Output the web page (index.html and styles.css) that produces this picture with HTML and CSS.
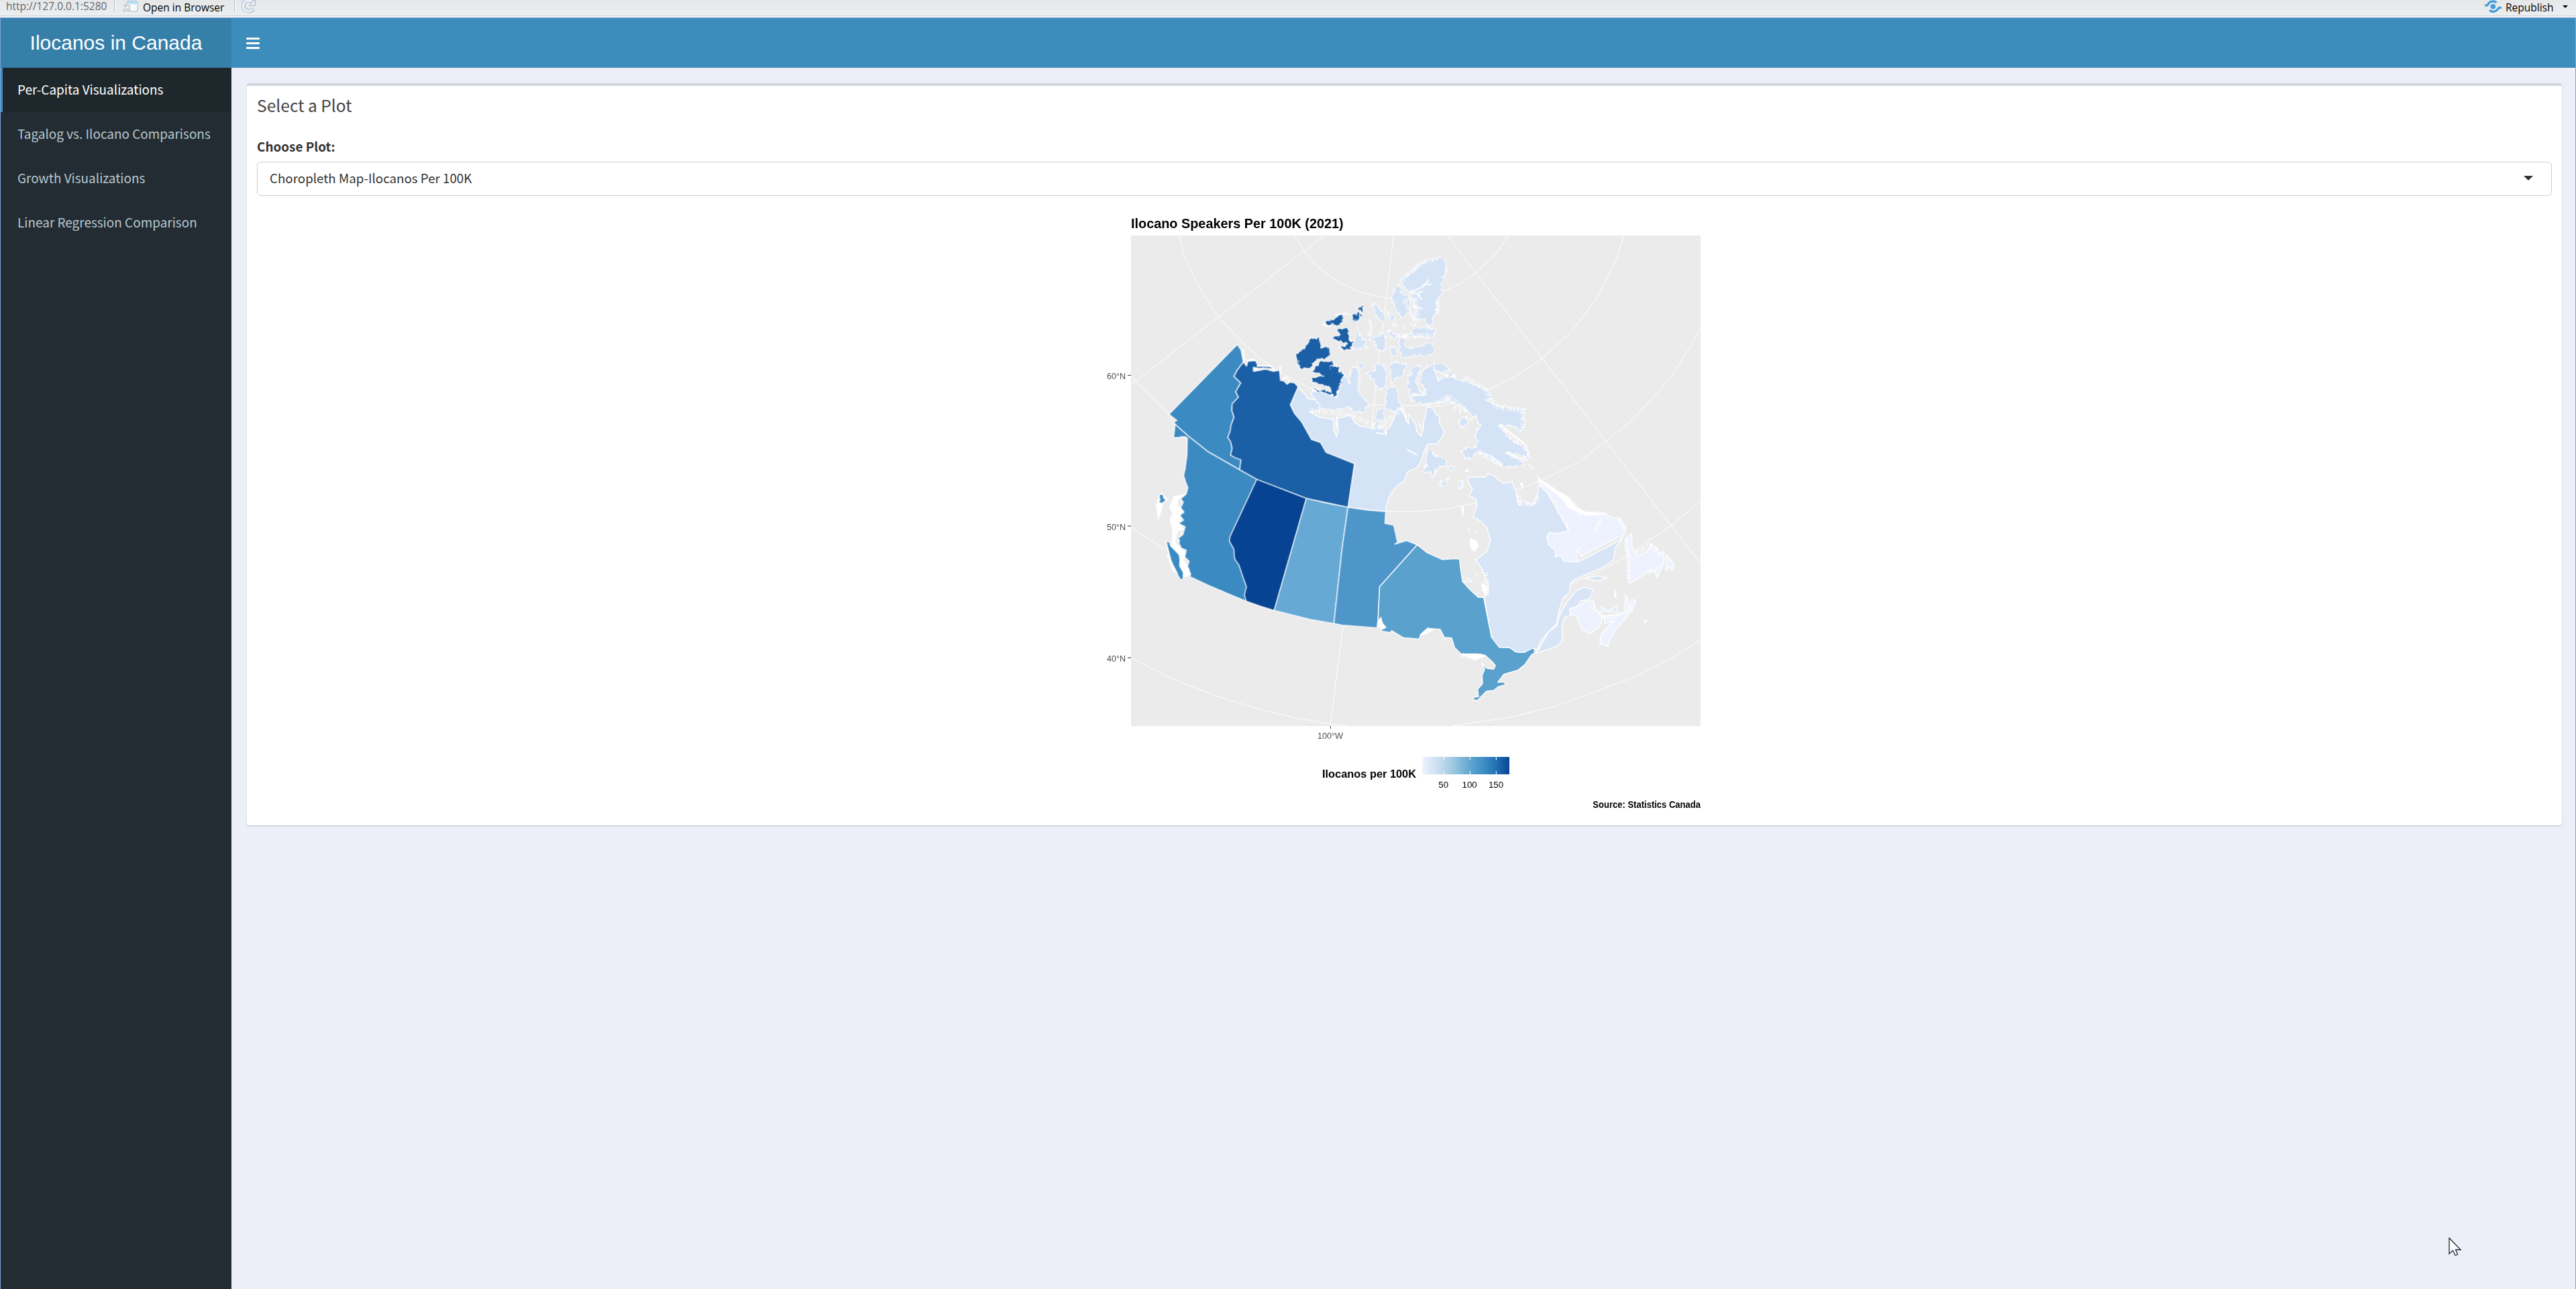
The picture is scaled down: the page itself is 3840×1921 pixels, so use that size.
FILE: index.html
```html
<!DOCTYPE html>
<html lang="en">
<head>
<meta charset="utf-8">
<title>Ilocanos in Canada</title>
<link rel="stylesheet" href="styles.css">
</head>
<body>
<div class="viewer-bar">
  <span class="url">http://127.0.0.1:5280</span>
  <i class="sep"></i>
  <svg class="ic-open" width="24" height="20" viewBox="0 0 24 20"><rect x="7" y="1.500" width="16" height="15.500" rx="2" fill="#f6f9fc" stroke="#a9b9c9"/><path d="M7 3.500q0-2 2-2h12q2 0 2 2V6H7z" fill="#b9dcf2"/><path d="M1.500 16l4.500-4.500-3-3.500h8v8l-3-3-4.500 4.500z" fill="#f4f6f8" stroke="#9aa3ac"/></svg>
  <span class="open">Open in Browser</span>
  <i class="sep sep2"></i>
  <svg class="ic-reload" width="24" height="20" viewBox="0 0 24 20"><path d="M17 2.500A8 8 0 1 0 18.500 13" fill="none" stroke="#a9b6c6" stroke-width="6"/><path d="M21.500-1v9.500h-9.500z" fill="#e6eef8" stroke="#a9b6c6"/><path d="M16.500 2.500A8 8 0 1 0 18 13.500" fill="none" stroke="#e6eef8" stroke-width="4"/></svg>
  <svg class="ic-pub" width="25" height="20" viewBox="0 0 25 20"><g fill="none" stroke="#3e9ddd" stroke-width="3.200"><path d="M0 8h3.500C5 8 5 2 12 1.800c3 0 4 1 5.500 2"/><path d="M25 11.500h-3.500C20 11.500 19 17.300 12.500 17.300c-3 0-4-1-5.500-2"/></g><circle cx="12.300" cy="9.700" r="3.800" fill="#3e9ddd"/></svg>
  <span class="pub">Republish</span>
  <i class="tri"></i>
</div>
<div class="app">
  <aside class="sidebar">
    <div class="logo">Ilocanos in Canada</div>
    <a class="item active">Per-Capita Visualizations</a>
    <a class="item">Tagalog vs. Ilocano Comparisons</a>
    <a class="item">Growth Visualizations</a>
    <a class="item">Linear Regression Comparison</a>
  </aside>
  <div class="main">
    <div class="navbar"><span class="burger"><i></i><i></i><i></i></span></div>
    <section class="box">
      <h3 class="box-title">Select a Plot</h3>
      <div class="label">Choose Plot:</div>
      <div class="select"><span>Choropleth Map-Ilocanos Per 100K</span><i class="caret"></i></div>
      <svg class="plot" viewBox="0 0 2712 2772">
        <defs>
          <linearGradient id="blues"><stop offset="0" stop-color="#eff3ff"/><stop offset=".2" stop-color="#c6dbef"/><stop offset=".35" stop-color="#9ecae1"/><stop offset=".55" stop-color="#5fa5d1"/><stop offset=".7" stop-color="#3f8ec5"/><stop offset=".85" stop-color="#2171b5"/><stop offset="1" stop-color="#084594"/></linearGradient>
          <clipPath id="panel"><path d="M138 153H2685V2346H138z"/></clipPath>
          <filter id="rough" x="-5%" y="-5%" width="110%" height="110%" color-interpolation-filters="sRGB"><feTurbulence type="fractalNoise" baseFrequency=".055" numOctaves="3" seed="4"/><feDisplacementMap in="SourceGraphic" scale="26" xChannelSelector="R" yChannelSelector="G"/></filter>
        </defs>
        <path d="M138 153H2685V2346H138z" fill="#ebebeb"/>
        <g class="grid" clip-path="url(#panel)">
          <path d="M1002 153 912 222 530 517 138 820M1312 153 1280 433 1243 720 1215 1010 1086 1897 1030 2337V2346M1553 153 1680 320 1977 702 2263 1075 2553 1450 2685 1618"/>
          <path d="M868 153 912 222 970 290 1060 358 1150 402 1280 433 1400 433 1528 405 1605 370 1680 320 1770 235 1825 153"/>
          <path d="M352 153 375 240 415 330 470 430 530 517 610 605 700 690 770 742 870 800 950 840 1210 910 1530 916 1740 840 1880 770 1977 702 2110 580 2230 420 2305 270 2340 153"/>
          <path d="M138 780 158 803 300 945 335 997 395 1050 623 1200 1277 1387 1410 1387 1530 1378 1680 1350 1860 1293 1983 1242 2140 1165 2263 1073 2380 977 2480 870 2560 775 2645 640 2685 565"/>
          <path d="M138 1452 180 1487 295 1557M2105 1710 2230 1657 2355 1588 2410 1545 2553 1450 2685 1342"/>
          <path d="M138 2041 300 2125 500 2205 700 2268 860 2307 1030 2337 1115 2346M1574 2346 1820 2309 2035 2258 2240 2183 2370 2133 2550 2045 2685 1962"/>
        </g>

        <!-- Nunavut -->
        <g class="land nu" transform="translate(780 420)">
          <path d="M105 412 70 490 90 530 120 565 165 648 205 660 230 703 357 755 328 948 497 967 500 940 510 905 525 880 545 855 580 830 595 790 640 770 660 730 668 700 685 665 725 665 755 625 755 600 735 570 740 545 720 530 710 505 680 500 676 540 668 560 664 605 655 630 635 608 632 580 605 540 598 530 600 575 590 560 586 530 566 508 540 518 535 550 515 590 500 600 500 626 490 600 465 590 440 600 420 590 385 586 360 570 340 535 305 545 278 550 286 600 278 632 265 605 264 555 200 545 160 522 200 515 208 485 190 468 150 462 130 435z"/>
        </g>
        <g class="land nu" filter="url(#rough)">
          <g transform="translate(780 420)">
            <path d="M308 345 328 390 338 388 345 320 365 322 378 345 380 370 375 425 395 460 420 480 405 520 370 525 325 500 270 515 205 505 195 480 172 460 165 422 280 455z"/>
            <path d="M368 303 395 303 394 322 380 338z"/>
            <path d="M375 143 385 190 405 200 400 235 350 238 345 205 360 200z"/>
            <path d="M424 170 440 190 470 182 480 168 496 180 497 245 465 252 447 225 452 205 425 200z"/>
            <path d="M440 40 465 45 475 70 490 80 492 115 470 112 450 80z"/><path d="M505 72 525 85 540 110 520 115z"/><path d="M422 112 432 135 430 165z"/>
            <path d="M522 125 550 130 535 138z"/><path d="M572 135 585 145 578 155zM608 120 625 128 615 142zM408 228 420 235 410 242z"/>
            <path d="M505 160 548 172 545 195 520 190z"/><path d="M513 235 540 232 546 270 520 272z"/>
            <path d="M555 190 580 190 582 225 610 235 650 228 685 214 710 220 718 245 700 268 640 270 570 280 560 250z"/>
            <path d="M565 185 600 175 625 148 700 145 720 157 705 190 640 185z"/>
            <path d="M415 345 445 340 450 310 490 308 498 350 500 400 465 425 440 380z"/>
            <path d="M518 305 550 300 590 308 570 365 545 370 520 400z"/>
            <path d="M500 425 530 400 550 430 553 470 568 500 540 518 500 510 495 450z"/>
            <path d="M457 508 490 515 495 545 470 560 450 545zM440 575 470 570 500 590 450 595z"/>
            <path d="M600 360 625 315 658 312 640 350 638 400 650 430 670 438 605 445 595 410z"/>
          </g>
          <g transform="translate(1380 120)">
            <path d="M55 650 78 622 105 610 120 640 130 680 165 665 200 660 225 680 270 685 290 705 320 705 355 730 375 755 345 770 375 785 430 800 460 810 512 812 520 880 500 905 450 880 405 880 450 940 500 970 530 1005 548 1030 480 1010 435 1003 480 1030 525 1060 420 1068 385 1045 340 1020 300 1000 285 1030 245 1025 240 995 265 983 300 975 318 958 295 935 318 880 300 850 270 825 240 800 205 785 165 748 180 775 130 775 90 788 30 780 5 755 72 742 72 715 50 690z"/>
            <path d="M108 608 155 605 183 635 140 647 122 635zM160 655 190 645 210 660 180 665z"/>
            <path d="M230 850 255 843 265 870 240 893 227 875z"/>
            <path d="M80 990 100 995 120 1020 150 1025 170 1045 165 1060 135 1068 105 1112 98 1090 65 1090 80 1050zM165 1068 205 1070 185 1085z"/>
            <path d="M140 1135 178 1115 160 1150 143 1152zM222 1140 238 1130 240 1160 228 1162zM250 1080 268 1075 260 1088zM538 1055 558 1070 545 1072zM205 800 215 805 210 812zM222 815 232 812 230 825zM50 880 60 885 56 900zM270 850 288 852 275 858z"/>
          </g>
          <path d="M1345 355 1365 335 1390 315 1410 308 1420 285 1440 275 1470 262 1525 252 1548 270 1545 320 1530 350 1528 405 1505 450 1510 490 1485 520 1488 550 1465 560 1450 525 1400 525 1415 490 1400 440 1390 415 1425 412 1450 400 1420 405 1385 408 1365 395z"/>
          <path d="M1335 370 1350 395 1348 410 1375 425 1390 445 1385 500 1350 520 1330 505 1320 480 1305 440 1312 395z"/>
        </g>
        <path class="fuzz" d="M1345 355 1390 315 1440 275 1500 258M1510 440 1505 500M1360 440 1405 530M1410 430 1420 540M1630 785 1720 835 1770 920 1890 935 1890 1020M1785 1000 1890 1085M1690 1120 1800 1180M1500 905 1560 870 1640 940M1325 600 1480 600M935 935 1100 950 1250 1010 1360 920"/>
        <path class="icefield" d="M1400 470 1440 480M1385 405 1440 385 1470 350M1440 375 1480 370M1420 415 1440 440M1060 960 1055 1020M1350 930 1375 990M1785 1000 1840 1040 1900 1085 1912 1115M1815 1125 1910 1160M1690 1120 1750 1140 1800 1185M1235 1035 1275 1040M1372 1110 1420 1135"/>

        <!-- Northwest Territories and Yukon -->
        <g class="land nt">
          <path d="M640 718 655 737 660 715 695 712 705 735 765 740 770 750 730 752 685 742 685 760 712 756 740 750 775 760 802 755 806 800 822 804 835 818 850 808 870 812 885 830 850 910 870 950 900 985 945 1065 985 1078 1010 1122 1137 1173 1108 1368 922 1328 700 1243 623 1200 629 1156 605 1147 582 1135 590 1105 583 1075 570 1055 580 1030 585 1000 598 965 588 935 590 905 618 875 605 852 628 812 598 783 612 755z"/>
          <g transform="translate(780 420)" filter="url(#rough)">
            <path d="M162 187 200 195 212 235 240 228 250 272 190 290 165 315 145 328 107 328 105 290 93 270 130 240 155 210z"/>
            <path d="M175 330 200 300 262 288 265 310 250 325 275 310 292 325 280 340 308 345 278 455 165 418 175 415 240 428 255 435 240 408 170 385 170 368 222 360 175 345z"/>
            <path d="M218 125 260 106 285 84 306 88 304 125 265 142 258 128 230 138zM262 185 296 178 275 158 300 146 328 152 338 200 352 210 342 238 310 246 286 232 330 220 300 208 270 198zM346 88 386 80 376 112 350 108zM364 60 394 50 392 74z"/>
          </g>
        </g>
        <path class="land west" d="M613 640 630 665 640 718 612 755 598 783 628 812 605 852 618 875 590 905 588 935 598 965 585 1000 580 1030 570 1055 583 1075 590 1105 582 1135 605 1147 629 1156 623 1200 480 1118 395 1050 335 997 330 985 343 980 308 952z"/>
        <path class="icefield" d="M655 712 690 706M700 737 765 735M690 752 730 746 780 752M805 735 806 770M815 798 830 785 848 805M640 660 645 715M1050 510 1110 500M1000 550 1030 560"/>

        <!-- British Columbia and the Prairies -->
        <g class="land" transform="translate(180 900)">
          <path class="west" d="M155 97 152 125 148 155 175 157 180 152 200 153 210 158 208 235 200 295 193 325 202 355 212 380 205 408 180 430 192 445 180 470 195 490 175 505 193 525 170 540 200 555 190 590 165 610 182 650 205 660 198 690 218 710 205 745 222 778 300 815 400 858 473 888 520 343 443 300 300 218 215 150z"/>
          <path class="snow" d="M150 420 200 410 168 432 165 460 190 485 172 500 185 515 165 535 195 565 165 575 155 610 160 635 200 670 190 700 215 740 225 770 200 778 185 740 175 690 140 640 145 570 132 520 145 500 132 465z"/>
          <path class="west" d="M112 618 130 625 135 640 178 685 175 730 192 760 190 792 178 790 150 740 135 700 122 650z"/>
          <path class="snow" d="M95 402 105 420 122 432 100 450 90 490 80 522 72 460 82 420z"/>
          <path class="west" d="M88 412 98 412 104 430 112 434 98 448 84 444 92 430 86 428z" stroke="none"/>
          <path class="west" d="M172 470 180 475 176 482zM160 490 168 496 164 504zM175 520 184 524 178 532zM155 560 163 566 158 574zM180 580 190 588 184 594zM168 610 176 616 170 624z"/>
          <path class="ab" d="M520 343 742 428 598 929 535 910 473 888 465 860 474 823 455 770 440 725 425 705 420 690 418 655 398 620 400 600z"/>
          <path class="sk" d="M742 428 835 450 928 468 902 650 865 988 760 970 598 929z"/>
          <path class="mb" d="M928 468 1010 480 1097 487 1093 540 1133 548 1150 625 1137 633 1190 617 1238 636 1070 823 1063 965 1058 1007 905 995 865 988 902 650z"/>
        </g>
        <path class="icefield" d="M295 1525 315 1610 345 1665M300 1580 330 1660M355 1580 362 1640"/>

        <!-- Ontario, Quebec and the Atlantic provinces -->
        <g class="land" transform="translate(1380 1020)">
          <path class="on" d="M38 516 80 550 150 582 205 578 227 580 232 625 240 680 275 718 310 750 335 752 370 928 405 974 450 975 480 995 515 997 545 978 562 980 562 1000 548 1008 520 1050 490 1075 425 1095 398 1130 428 1130 432 1142 400 1150 380 1167 348 1170 318 1200 310 1210 290 1210 290 1197 312 1195 308 1162 330 1137 328 1100 340 1070 325 1045 350 1068 380 1072 388 1055 370 1035 342 1010 320 1005 235 1005 205 975 192 932 160 930 140 893 85 890 60 910 45 937 0 933-20 932-30 928-75 900-85 908-120 902-137 845-130 703z"/>
          <path class="snow" d="M-135 855-125 840-118 865-102 885-115 892-138 880zM235 1005 300 1003 340 1012 315 1022 300 1030 270 1020zM50 920 85 888 110 895 75 915z"/>
          <path class="qc" d="M355 198 378 205 400 225 420 240 465 235 470 260 480 275 488 330 505 318 555 340 572 310 583 250 605 262 630 300 715 452 757 593 952 492 925 530 915 585 860 620 790 650 740 672 722 690 720 728 690 755 675 800 660 870 620 910 590 945 575 985 555 978 515 997 480 995 450 975 405 974 370 928 337 752 355 730 355 690 325 620 300 583 350 545 365 495 350 440 325 412 287 392 305 340 300 310 270 297 285 265 268 240 262 213 340 213z"/>
          <path class="nl" d="M575 205 590 235 630 250 670 290 705 300 730 345 780 370 880 375 910 395 940 395 972 450 952 492 940 478 770 568 750 545 765 530 745 545 757 593 695 590 680 562 655 570 655 540 625 515 618 480 628 460 665 465 715 452 700 405 668 375 660 330 630 305 632 285 605 272 588 245z"/>
          <path class="qc" d="M570 1000 600 950 625 905 660 880 680 820 710 770 745 725 785 705 825 715 815 745 800 762 770 765 750 795 720 800 722 830 695 840 685 880 688 945 660 970 620 985z"/>
          <path class="nl" d="M720 800 750 795 790 770 828 765 830 800 870 840 850 885 810 915 775 895 750 835 722 825z"/>
          <path class="nl" d="M875 835 930 830 975 815 1000 760 1017 768 990 820 930 890 905 930 890 970 855 955 860 915 918 855 875 868zM970 738 980 760 985 800 965 800z"/>
          <path class="qc" d="M790 665 845 655 888 663 845 678zM248 680 262 665 285 680z"/>
          <path class="pe" d="M862 793 880 808 910 805 935 785 930 812 865 815z"/>
          <path class="nl" d="M972 490 995 465 1000 530 1020 565 1060 550 1090 518 1112 530 1120 560 1140 545 1140 600 1110 662 1100 632 1080 632 1040 655 990 690 980 670 985 570 970 530zM1150 560 1170 580 1188 610 1175 630 1165 610 1152 632z"/>
          <path class="snow" d="M590 225 660 275 710 300 745 345 790 370 870 375 800 385 750 365 715 350 690 315 640 270z"/>
          <path class="grey" d="M828 450 860 400 852 425 833 455z"/>
          <path class="snow" d="M275 490 300 495 312 520 295 545 278 530zM238 345 246 350 240 385zM268 440 272 465zM298 455 312 462zM325 690 350 700 345 740 330 715zM1052 860 1064 852 1060 862zM922 715 928 745 920 750zM300 645 310 655zM160 938 170 944zM500 240 512 242 506 260z"/>
        </g>
        <g class="fuzz" transform="translate(1380 1020)"><path d="M580 230 640 265 720 320 770 370 880 380M485 290 500 330 560 335 580 290M1010 550 1080 520 1130 560M820 790 870 840 930 830 1000 800M345 640 350 740M230 1010 330 1015M1070 640 1130 610M940 400 970 450M975 490 985 670"/></g>

        <path class="tick" d="M123 778H138M123 1452H138M123 2041H138M1030 2346V2358"/>
        <text class="ptitle" x="138" y="120" textLength="950" lengthAdjust="spacingAndGlyphs">Ilocano Speakers Per 100K (2021)</text>
        <g class="axis"><text x="30" y="795" textLength="84" lengthAdjust="spacingAndGlyphs">60°N</text><text x="30" y="1469" textLength="84" lengthAdjust="spacingAndGlyphs">50°N</text><text x="30" y="2057" textLength="84" lengthAdjust="spacingAndGlyphs">40°N</text><text x="972" y="2403" textLength="114" lengthAdjust="spacingAndGlyphs">100°W</text></g>
        <text class="ltitle" x="993" y="2577" textLength="420" lengthAdjust="spacingAndGlyphs">Ilocanos per 100K</text>
        <path d="M1440 2484H1830V2562H1440z" fill="url(#blues)"/>
        <path class="lt" d="M1537 2484V2499M1537 2547V2562M1654 2484V2499M1654 2547V2562M1771 2484V2499M1771 2547V2562"/>
        <g class="lab"><text x="1535" y="2622">50</text><text x="1652" y="2622">100</text><text x="1770" y="2622">150</text></g>
        <text class="source" x="2203" y="2712" textLength="482" lengthAdjust="spacingAndGlyphs">Source: Statistics Canada</text>
      </svg>
    </section>
  </div>
</div>
<svg class="cursor" width="20" height="29" viewBox="0 0 20 29"><path d="M1 1V24.500L6.500 19.500 10 27 13.500 25.500 10.500 18.500H18z" fill="#fff" stroke="#1c2230" stroke-width="1.300"/></svg>
</body>
</html>
```
FILE: styles.css
```css
* { box-sizing: border-box; }
body { margin: 0; width: 3840px; height: 1921px; overflow: hidden; display: flex; flex-direction: column; background: #eceff8; font-family: "Noto Sans CJK SC", "Noto Sans", sans-serif; }
.viewer-bar { height: 26px; flex: none; display: flex; align-items: flex-start; padding-left: 9px; background: linear-gradient(#e5e7e9, #edeeef 23px, #cfd3d9 23px, #cfd3d9 24px, #f0f1f3 24px); font: 16px/22px "Open Sans", sans-serif; color: #000; white-space: nowrap; }
.viewer-bar span { display: block; }
.url { width: 161px; margin-top: -2px; font-size: 15.500px; color: #666; }
.sep { width: 2px; height: 19px; flex: none; background: #b9bcc0; border-right: 1px solid #fff; }
.ic-open { margin-left: 10px; flex: none; }
.open { width: 136px; margin-left: 7px; font-size: 15.500px; }
.ic-reload { margin-left: 8px; }
.ic-pub { margin-left: auto; }
.pub { margin-left: 6px; width: 70px; font-size: 15.500px; }
.tri { margin: 8px 12px 0 15px; border: 4px solid transparent; border-top-color: #000; border-bottom: 0; }
.app { flex: 1; display: flex; border: 1px solid #7ea3d8; border-bottom: 0; }
.sidebar { width: 344px; background: #232c33; display: flex; flex-direction: column; }
.logo { height: 74px; background: #367fa9; color: #fff; font: 30px/74px "Liberation Sans", sans-serif; text-align: center; }
.item { height: 66px; border-left: 3px solid transparent; padding-left: 22px; font-size: 18.950px; line-height: 63px; color: #b8c7ce; white-space: nowrap; }
.active { background: #1e282c; border-color: #3c8dbc; color: #fff; }
.main { flex: 1; display: flex; flex-direction: column; }
.navbar { height: 74px; background: #3c8dbc; padding: 29px 0 0 22px; }
.burger { display: flex; flex-direction: column; gap: 4px; width: 20px; }
.burger i { height: 3px; border-radius: 1px; background: #fff; }
.box { margin: 23px 20px 0 23px; height: 1106px; border-top: 4px solid #d2d6de; border-radius: 4px; background: #fff; box-shadow: 0 1px 2px rgba(0,0,0,.2); padding: 0 15px; display: flex; flex-direction: column; }
.box-title { margin: 12px 0 0; font-size: 24.600px; line-height: 32px; font-weight: 400; color: #444; }
.label { margin-top: 32px; font-size: 18.900px; line-height: 28px; font-weight: 700; color: #333; }
.select { margin-top: 9px; height: 51px; flex: none; border: 1px solid #ccc; border-radius: 6px; padding: 0 27px 0 18px; display: flex; align-items: center; justify-content: space-between; font-size: 18.750px; color: #333; }
.select span { line-height: 44px; margin-top: -3px; }
.caret { border: 7px solid transparent; border-top-color: #333; border-bottom: 0; margin-top: -3px; }
.plot { width: 904px; height: 924px; flex: none; align-self: center; margin: 8px 4px 0 0; }
.grid path { fill: none; stroke: #fff; stroke-width: 3; }
.land { stroke: #fff; stroke-width: 4; stroke-linejoin: round; }
.nu { fill: #d5e3f6; }
.nt { fill: #1b5fa6; }
.west { fill: #3c8ac2; }
.ab { fill: #064493; }
.sk { fill: #66a9d5; }
.mb { fill: #4e96ca; }
.on { fill: #5aa1ce; }
.qc { fill: #d8e5f6; }
.nl { fill: #eef2ff; }
.pe { fill: #d9ecf8; }
.grey { fill: #ebebeb; }
.snow { fill: #fff; }
.fuzz { fill: none; stroke: #fff; stroke-width: 22; stroke-dasharray: 3 7 5 9 2 6; }
.icefield { fill: none; stroke: #fff; stroke-width: 7; stroke-dasharray: 18 2 9 1; }
.tick { stroke: #333; stroke-width: 3; }
.lt { stroke: #fff; stroke-width: 3; }
.plot text { font-family: "Liberation Sans", sans-serif; }
.ptitle { font-size: 61px; font-weight: 700; }
.axis { font-size: 41px; fill: #4d4d4d; }
.ltitle { font-size: 50px; font-weight: 700; }
.lab { font-size: 40px; text-anchor: middle; }
.plot .source { font-size: 43px; font-weight: 700; }
.cursor { position: absolute; left: 3650px; top: 1844px; }
```
